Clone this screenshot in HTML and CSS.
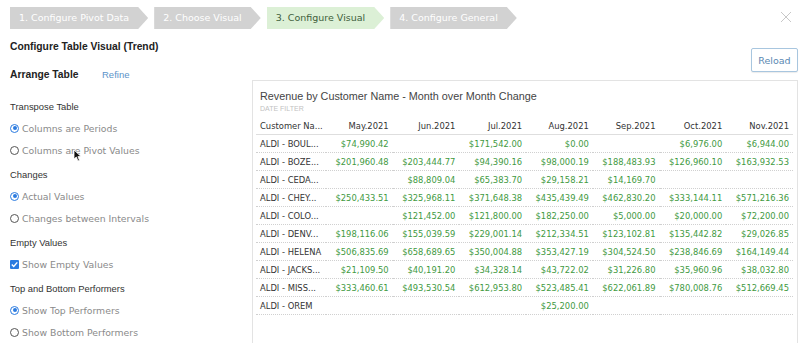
FILE: index.html
```
<!DOCTYPE html>
<html lang="en">
<head>
    <meta charset="UTF-8">
    <meta name="viewport" content="width=device-width, initial-scale=1.0">
    <title>Configure Visual</title>
    <link rel="stylesheet" href="styles.css">
</head>
<body>

<div class="topbar">
    <div class="steps">
        <div class="step">1. Configure Pivot Data</div>
        <div class="step">2. Choose Visual</div>
        <div class="step active">3. Configure Visual</div>
        <div class="step">4. Configure General</div>
    </div>
    <div class="close">
        <svg width="12" height="12" viewBox="0 0 12 12"><path d="M1 1L11 11M11 1L1 11" stroke="#c8c8c8" stroke-width="1"/></svg>
    </div>
</div>

<div class="main">
    <div class="sidebar">
        <div class="title">Configure Table Visual (Trend)</div>
        <div class="arrange">
            <span class="arrange-label">Arrange Table</span>
            <a class="refine">Refine</a>
        </div>

        <div class="section">
            <div class="row heading">Transpose Table</div>
            <div class="row option"><span class="radio checked"></span>Columns are Periods</div>
            <div class="row option"><span class="radio"></span>Columns are Pivot Values</div>
        </div>
        <div class="section">
            <div class="row heading">Changes</div>
            <div class="row option"><span class="radio checked"></span>Actual Values</div>
            <div class="row option"><span class="radio"></span>Changes between Intervals</div>
        </div>
        <div class="section">
            <div class="row heading">Empty Values</div>
            <div class="row option">
                <span class="checkbox">
                    <svg width="9" height="9" viewBox="0 0 9 9"><path d="M1.8 4.6L3.7 6.5L7.3 2.4" stroke="#fff" stroke-width="1.4" fill="none"/></svg>
                </span>Show Empty Values
            </div>
        </div>
        <div class="section">
            <div class="row heading">Top and Bottom Performers</div>
            <div class="row option"><span class="radio checked"></span>Show Top Performers</div>
            <div class="row option"><span class="radio"></span>Show Bottom Performers</div>
        </div>

        <svg class="cursor" width="9" height="13" viewBox="0 0 9 13"><path d="M1 1L1 10L3.3 8L5 12L6.5 11.3L4.9 7.6L8 7.5Z" fill="#111" stroke="#fff" stroke-width="0.8"/></svg>
    </div>

    <div class="content">
        <div class="toolbar">
            <button class="reload">Reload</button>
        </div>
        <div class="panel">
            <div class="chart-title">Revenue by Customer Name - Month over Month Change</div>
            <div class="chart-sub">DATE FILTER</div>
            <table class="grid">
                <thead>
                    <tr>
                        <th class="name">Customer Na...</th>
                        <th>May.2021</th>
                        <th>Jun.2021</th>
                        <th>Jul.2021</th>
                        <th>Aug.2021</th>
                        <th>Sep.2021</th>
                        <th>Oct.2021</th>
                        <th>Nov.2021</th>
                    </tr>
                </thead>
                <tbody id="rows"></tbody>
            </table>
        </div>
    </div>
</div>

<script>
    const rows = [
        ['ALDI - BOUL...', '$74,990.42', '', '$171,542.00', '$0.00', '', '$6,976.00', '$6,944.00'],
        ['ALDI - BOZE...', '$201,960.48', '$203,444.77', '$94,390.16', '$98,000.19', '$188,483.93', '$126,960.10', '$163,932.53'],
        ['ALDI - CEDA...', '', '$88,809.04', '$65,383.70', '$29,158.21', '$14,169.70', '', ''],
        ['ALDI - CHEY...', '$250,433.51', '$325,968.11', '$371,648.38', '$435,439.49', '$462,830.20', '$333,144.11', '$571,216.36'],
        ['ALDI - COLO...', '', '$121,452.00', '$121,800.00', '$182,250.00', '$5,000.00', '$20,000.00', '$72,200.00'],
        ['ALDI - DENV...', '$198,116.06', '$155,039.59', '$229,001.14', '$212,334.51', '$123,102.81', '$135,442.82', '$29,026.85'],
        ['ALDI - HELENA', '$506,835.69', '$658,689.65', '$350,004.88', '$353,427.19', '$304,524.50', '$238,846.69', '$164,149.44'],
        ['ALDI - JACKS...', '$21,109.50', '$40,191.20', '$34,328.14', '$43,722.02', '$31,226.80', '$35,960.96', '$38,032.80'],
        ['ALDI - MISS...', '$333,460.61', '$493,530.54', '$612,953.80', '$523,485.41', '$622,061.89', '$780,008.76', '$512,669.45'],
        ['ALDI - OREM', '', '', '', '$25,200.00', '', '', '']
    ];

    const body = document.getElementById('rows');
    rows.forEach(r => {
        const tr = document.createElement('tr');
        tr.innerHTML = r.map((v, i) => i === 0 ? `<td class="name">${v}</td>` : `<td>${v}</td>`).join('');
        body.appendChild(tr);
    });
</script>

</body>
</html>
```

FILE: styles.css
```
body {
    margin: 0;
    font-family: "Liberation Sans", Arial, sans-serif;
    background: #fff;
    color: #333;
    width: 800px;
    height: 343px;
    overflow: hidden;
}

/* top wizard steps */
.topbar {
    height: 36px;
    display: flex;
    justify-content: space-between;
    align-items: flex-start;
}
.steps {
    display: flex;
    gap: 6px;
    padding: 7px 0 0 10px;
}
.step {
    height: 22px;
    line-height: 22px;
    padding: 0 19px 0 9px;
    background: #d2d2d2;
    color: #fff;
    font-family: "DejaVu Sans", Verdana, sans-serif;
    font-size: 9.5px;
    clip-path: polygon(0 0, calc(100% - 10px) 0, 100% 50%, calc(100% - 10px) 100%, 0 100%);
}
.step.active {
    background: #dcf0d6;
    color: #3f5f3c;
}
.close {
    padding: 9px 8px 0 0;
}

.main {
    display: flex;
}

/* left options */
.sidebar {
    width: 242px;
    padding-left: 10px;
    position: relative;
}
.title {
    margin-top: 3px;
    line-height: 16px;
    font-size: 10.3px;
    font-weight: bold;
    color: #222;
}
.arrange {
    margin-top: 12px;
    line-height: 16px;
    display: flex;
}
.arrange-label {
    width: 92px;
    font-size: 10.3px;
    font-weight: bold;
    color: #222;
}
.refine {
    font-size: 9.5px;
    color: #5b93c9;
}
.arrange + .section {
    margin-top: 12px;
}
.section {
    margin-top: 2px;
}
.row {
    height: 22px;
    display: flex;
    align-items: center;
}
.heading {
    font-size: 9.4px;
    color: #333;
}
.option {
    font-family: "DejaVu Sans", Verdana, sans-serif;
    font-size: 9.3px;
    color: #8a8a8a;
}
.radio {
    width: 7px;
    height: 7px;
    border: 1px solid #555;
    border-radius: 50%;
    margin-right: 3px;
    position: relative;
}
.radio.checked {
    border-color: #2b7be0;
}
.radio.checked::after {
    content: "";
    position: absolute;
    left: 1.5px;
    top: 1.5px;
    width: 4px;
    height: 4px;
    border-radius: 50%;
    background: #2b7be0;
}
.checkbox {
    width: 9px;
    height: 9px;
    background: #2b7be0;
    border-radius: 1px;
    margin-right: 3px;
    display: flex;
}
.cursor {
    position: absolute;
    left: 73px;
    top: 113px;
}

/* right side */
.content {
    flex: 1;
    padding-right: 2px;
}
.toolbar {
    display: flex;
    justify-content: flex-end;
    margin-top: 12px;
}
.reload {
    height: 24px;
    width: 47px;
    background: #fff;
    border: 1px solid #a8c6df;
    border-radius: 2px;
    color: #5a88b2;
    font-family: "DejaVu Sans", Verdana, sans-serif;
    font-size: 9.5px;
    padding: 0;
    box-shadow: 0 1px 1px rgba(0, 0, 0, 0.08);
}
.panel {
    margin-top: 8px;
    border: 1px solid #e3e3e3;
    border-bottom: none;
    height: 270px;
    padding: 9px 3px 0 3px;
}
.chart-title {
    padding-left: 4px;
    font-size: 10.8px;
    line-height: 13px;
    color: #444;
}
.chart-sub {
    padding-left: 4px;
    margin-top: 1px;
    font-size: 7px;
    line-height: 9px;
    color: #c2c2c2;
}
.grid {
    margin-top: 8px;
    width: 537px;
    table-layout: fixed;
    border-collapse: collapse;
    font-family: "DejaVu Sans", Verdana, sans-serif;
    font-size: 8.4px;
}
.grid th, .grid td {
    padding: 0 4px;
    text-align: right;
    white-space: nowrap;
    overflow: hidden;
}
.grid th {
    height: 13px;
    font-weight: normal;
    color: #333;
    border-bottom: 1px solid #dedede;
    vertical-align: top;
}
.grid th.name {
    width: 62px;
}
.grid td {
    height: 17px;
    color: #3f9a3f;
    border-bottom: 1px dotted #d0d0d0;
}
.grid .name {
    text-align: left;
    color: #333;
}
```
